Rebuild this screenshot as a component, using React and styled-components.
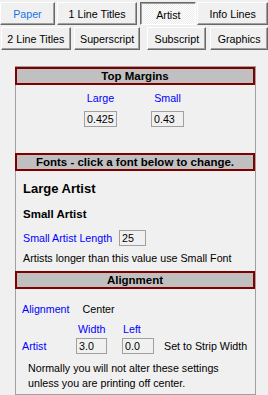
import React from 'react'
import styled, { createGlobalStyle } from 'styled-components'

const GlobalStyle = createGlobalStyle`
  html, body {
    margin: 0;
    padding: 0;
    background: #f0f0f0;
  }
  body {
    font-family: "Liberation Sans", Arial, sans-serif;
    font-size: 10.7px;
    color: #000;
  }
`

const Page = styled.div`
  width: 268px;
  height: 395px;
  overflow: hidden;
`

const TabRow = styled.div`
  display: flex;
  height: 23px;
  margin-top: ${p => p.$mt}px;
`

const Tab = styled.div`
  box-sizing: border-box;
  width: ${p => p.$w}px;
  margin-left: ${p => p.$ml || 0}px;
  height: 100%;
  display: flex;
  align-items: center;
  justify-content: center;
  background: #f0f0f0;
  color: ${p => (p.$hot ? '#1a73e8' : '#000')};
  border: 1px solid;
  border-color: #fff #696969 #696969 #fff;
  box-shadow: inset -1px -1px 0 #a0a0a0;
  white-space: nowrap;
  cursor: pointer;

  &[data-active='true'] {
    border-color: #696969 #fff #fff #696969;
    box-shadow: inset 1px 1px 0 #a0a0a0;
    background-image: repeating-conic-gradient(#fff 0 25%, #ececec 0 50%);
    background-size: 2px 2px;
    padding-top: 2px;
  }
`

const Panel = styled.div`
  box-sizing: border-box;
  width: 241px;
  margin: 16px 0 0 15px;
  border: 1px solid #a0a0a0;
  padding-bottom: 3px;
`

const Header = styled.div`
  box-sizing: border-box;
  height: 18px;
  margin: ${p => p.$mt || 0}px 0 0 -1px;
  background: #c0c0c0;
  border: 2px solid #800000;
  display: flex;
  align-items: center;
  justify-content: center;
  font-weight: bold;
  font-size: 11.5px;
`

const MarginGrid = styled.div`
  display: grid;
  grid-template-columns: 33px 33px;
  column-gap: 34px;
  row-gap: 6px;
  margin: 7px 0 0 68px;
`

const Label = styled.span`
  color: #0000ff;
  line-height: 13px;
  text-align: ${p => p.$align || 'left'};
  white-space: nowrap;
`

const Field = styled.div`
  box-sizing: border-box;
  width: ${p => p.$w}px;
  height: 16px;
  border: 1px solid #a0a0a0;
  padding-left: 2px;
  display: flex;
  align-items: center;
  font-size: 10.7px;
`

const FontName = styled.div`
  font-weight: bold;
  font-size: ${p => p.$size}px;
  line-height: ${p => p.$lh}px;
  margin: ${p => p.$mt}px 0 0 7px;
  cursor: pointer;
`

const Row = styled.div`
  display: flex;
  align-items: center;
  gap: ${p => p.$gap || 6}px;
  height: 16px;
  margin: ${p => p.$mt}px 0 0 ${p => p.$ml}px;
`

const Note = styled.div`
  line-height: ${p => p.$lh || 13}px;
  margin: ${p => p.$mt}px 0 0 ${p => p.$ml}px;
  white-space: nowrap;
`

const AlignGrid = styled.div`
  display: grid;
  grid-template-columns: 54px 46px 42px auto;
  align-items: center;
  margin: 6px 0 0 6px;
`

const GridLabel = styled(Label)`
  grid-column: ${p => p.$col};
  padding-left: ${p => p.$pl || 0}px;
  margin-bottom: 2px;
`

const tabsTop = [
  { label: 'Paper', w: 55, hot: true },
  { label: '1 Line Titles', w: 81, ml: 2 },
  { label: 'Artist', w: 56, ml: 3, active: true },
  { label: 'Info Lines', w: 71, ml: 1 },
]

const tabsBottom = [
  { label: '2 Line Titles', w: 70, ml: 1 },
  { label: 'Superscript', w: 67, ml: 3 },
  { label: 'Subscript', w: 59, ml: 7 },
  { label: 'Graphics', w: 58, ml: 4 },
]

const TabBar = ({ tabs, mt }) => (
  <TabRow $mt={mt}>
    {tabs.map(t => (
      <Tab key={t.label} $w={t.w} $ml={t.ml} $hot={t.hot} data-active={t.active ? 'true' : 'false'}>
        {t.label}
      </Tab>
    ))}
  </TabRow>
)

export default function App() {
  return (
    <Page>
      <GlobalStyle />
      <TabBar tabs={tabsTop} mt={2} />
      <TabBar tabs={tabsBottom} mt={2} />

      <Panel>
        <Header>Top Margins</Header>
        <MarginGrid>
          <Label $align="center">Large</Label>
          <Label $align="center">Small</Label>
          <Field $w={33}>0.425</Field>
          <Field $w={33}>0.43</Field>
        </MarginGrid>

        <Header $mt={26}>Fonts - click a font below to change.</Header>
        <FontName $size={13} $lh={16} $mt={10}>Large Artist</FontName>
        <FontName $size={11.5} $lh={14} $mt={10}>Small Artist</FontName>
        <Row $mt={9} $ml={7} $gap={7}>
          <Label>Small Artist Length</Label>
          <Field $w={27}>25</Field>
        </Row>
        <Note $mt={6} $ml={7}>Artists longer than this value use Small Font</Note>

        <Header $mt={6}>Alignment</Header>
        <Row $mt={12} $ml={6} $gap={13}>
          <Label>Alignment</Label>
          <span>Center</span>
        </Row>
        <AlignGrid>
          <GridLabel $col={2} $pl={2}>Width</GridLabel>
          <GridLabel $col={3} $pl={1}>Left</GridLabel>
          <span />
          <Label>Artist</Label>
          <Field $w={31}>3.0</Field>
          <Field $w={32}>0.0</Field>
          <span>Set to Strip Width</span>
        </AlignGrid>
        <Note $mt={7} $ml={12} $lh={15}>
          Normally you will not alter these settings
          <br />
          unless you are printing off center.
        </Note>
      </Panel>
    </Page>
  )
}
